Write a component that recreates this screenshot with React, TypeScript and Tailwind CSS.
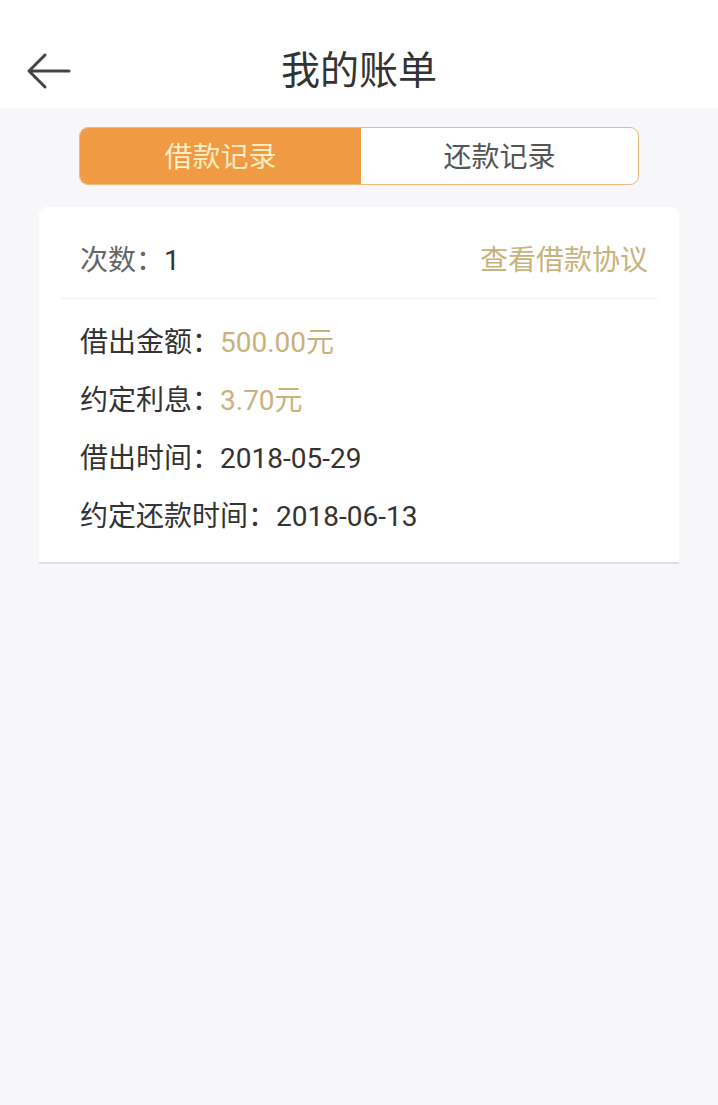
import React from "react";

export default function App() {
  const font = { fontFamily: 'Roboto, "Noto Sans CJK SC", "Noto Sans", sans-serif' };
  return (
    <div className="min-h-[1105px] w-[718px] bg-[#f7f7f9]" style={font}>
      <div className="relative flex h-[108px] items-center justify-center bg-white">
        <svg className="absolute left-[26px] top-[52px]" width="46" height="38" viewBox="0 0 46 38">
          <path d="M43 19 H4 M19 3 L3 19 L19 35" fill="none" stroke="#444" strokeWidth="3" strokeLinecap="round" strokeLinejoin="round" />
        </svg>
        <div className="mt-[34px] text-[39px] leading-[48px] text-[#333]">我的账单</div>
      </div>

      <div className="px-[79px] pt-[19px]">
        <div className="flex h-[58px] overflow-hidden rounded-[9px] border border-[#f0b77a] bg-white">
          <div className="flex w-[281px] items-center justify-center bg-[#f09a43] pt-[4px] text-[28px] text-[#fdecc4]">借款记录</div>
          <div className="flex flex-1 items-center justify-center pt-[4px] text-[28px] text-[#555]">还款记录</div>
        </div>
      </div>

      <div className="mx-[39px] mt-[22px] rounded-t-[8px] border-b-2 border-[#e0e0e2] bg-white">
        <div className="flex items-center justify-between pb-[20px] pl-[41px] pr-[31px] pt-[37px] text-[28px] leading-[34px]">
          <div>
            <span className="text-[#666]">次数：</span>
            <span className="text-[#333]">1</span>
          </div>
          <div className="text-[#c8b27c]">查看借款协议</div>
        </div>
        <div className="mx-[21px] h-px bg-[#f2f2f2]" />
        <div className="flex flex-col pb-[16px] pl-[41px] pt-[15px] text-[28px] text-[#333]">
          <div className="flex h-[58px] items-center">
            借出金额：<span className="text-[#c8b27c]">500.00元</span>
          </div>
          <div className="flex h-[58px] items-center">
            约定利息：<span className="text-[#c8b27c]">3.70元</span>
          </div>
          <div className="flex h-[58px] items-center">借出时间：2018-05-29</div>
          <div className="flex h-[58px] items-center">约定还款时间：2018-06-13</div>
        </div>
      </div>
    </div>
  );
}
